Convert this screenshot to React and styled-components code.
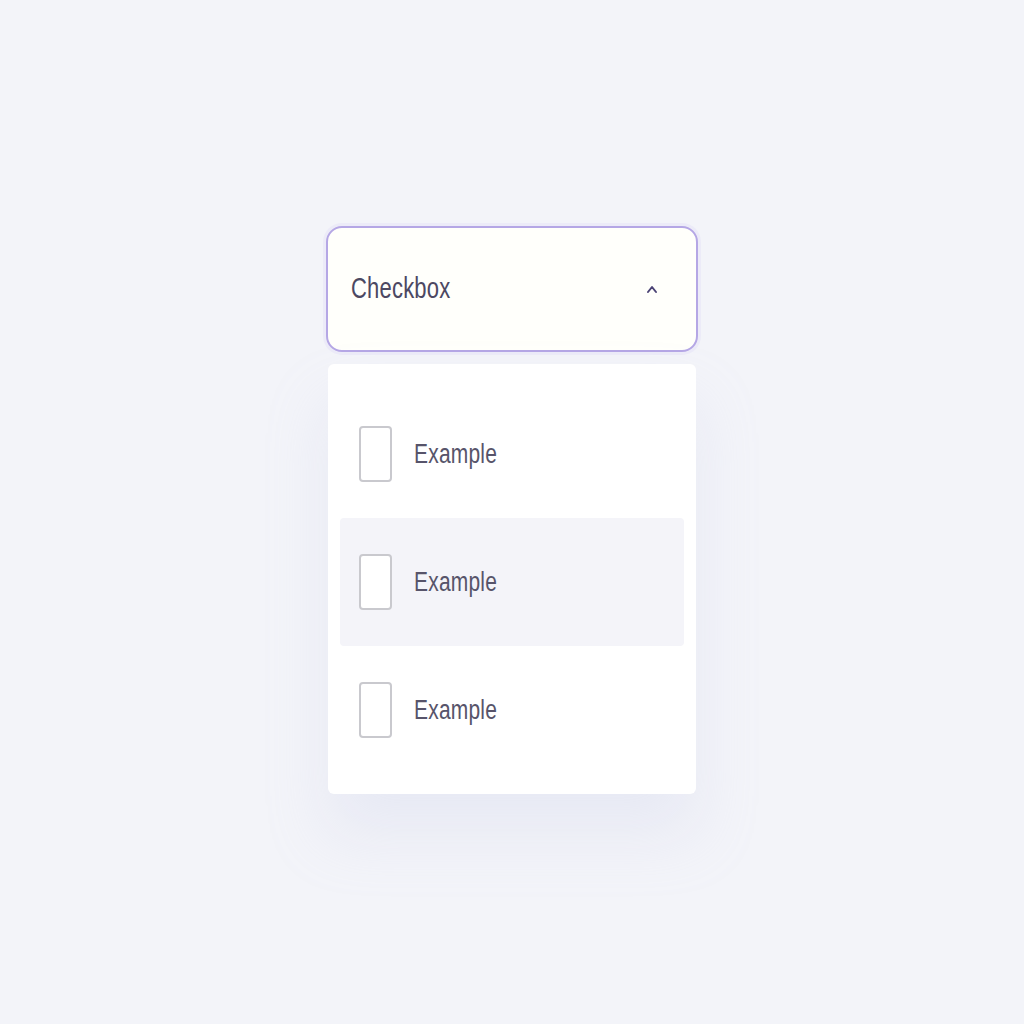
import React from 'react';
import styled, { createGlobalStyle } from 'styled-components';

const GlobalStyle = createGlobalStyle`
  html, body {
    margin: 0;
    padding: 0;
    background: #f3f4f9;
    font-family: "Liberation Sans", Arial, sans-serif;
  }
`;

const Page = styled.div`
  width: 1024px;
  height: 1024px;
  display: flex;
  justify-content: center;
  padding-top: 226px;
  box-sizing: border-box;
`;

const Card = styled.div`
  width: 372px;
  display: flex;
  flex-direction: column;
  gap: 12px;
  align-self: flex-start;
`;

const Trigger = styled.button`
  all: unset;
  box-sizing: border-box;
  height: 126px;
  border: 2px solid #b5a7e5;
  border-radius: 16px;
  background: #fffffb;
  display: flex;
  align-items: center;
  justify-content: space-between;
  padding: 0 38px 0 23px;
  box-shadow: 0 0 0 3px #ecebf8;
`;

const Label = styled.span`
  display: inline-block;
  font-size: ${(p) => p.size || 22}px;
  color: ${(p) => p.color || '#57546a'};
  transform: scaleY(1.3);
  letter-spacing: 0.2px;
`;

const Menu = styled.div`
  margin: 0 2px;
  background: #ffffff;
  border-radius: 6px;
  padding: 26px 12px 20px;
  display: flex;
  flex-direction: column;
  box-shadow: 0 40px 60px rgba(200, 205, 230, 0.25);
`;

const Row = styled.div`
  height: 128px;
  display: flex;
  align-items: center;
  gap: 22px;
  padding-left: 19px;
  border-radius: 4px;
  background: ${(p) => (p.active ? '#f4f4f9' : 'transparent')};
`;

const Box = styled.span`
  width: 29px;
  height: 52px;
  border: 2px solid #c9c9ce;
  border-radius: 4px;
  background: #fff;
  flex-shrink: 0;
`;

const Chevron = () => (
  <svg width="12" height="10" viewBox="0 0 12 10" fill="none">
    <path d="M2 8 L6 3 L10 8" stroke="#4b4375" strokeWidth="2" strokeLinecap="round" strokeLinejoin="round" />
  </svg>
);

export default function App() {
  const items = ['Example', 'Example', 'Example'];
  return (
    <>
      <GlobalStyle />
      <Page>
        <Card>
          <Trigger>
            <Label size={22} color="#4c4862">Checkbox</Label>
            <Chevron />
          </Trigger>
          <Menu>
            {items.map((t, i) => (
              <Row key={i} active={i === 1}>
                <Box />
                <Label size={21}>{t}</Label>
              </Row>
            ))}
          </Menu>
        </Card>
      </Page>
    </>
  );
}
